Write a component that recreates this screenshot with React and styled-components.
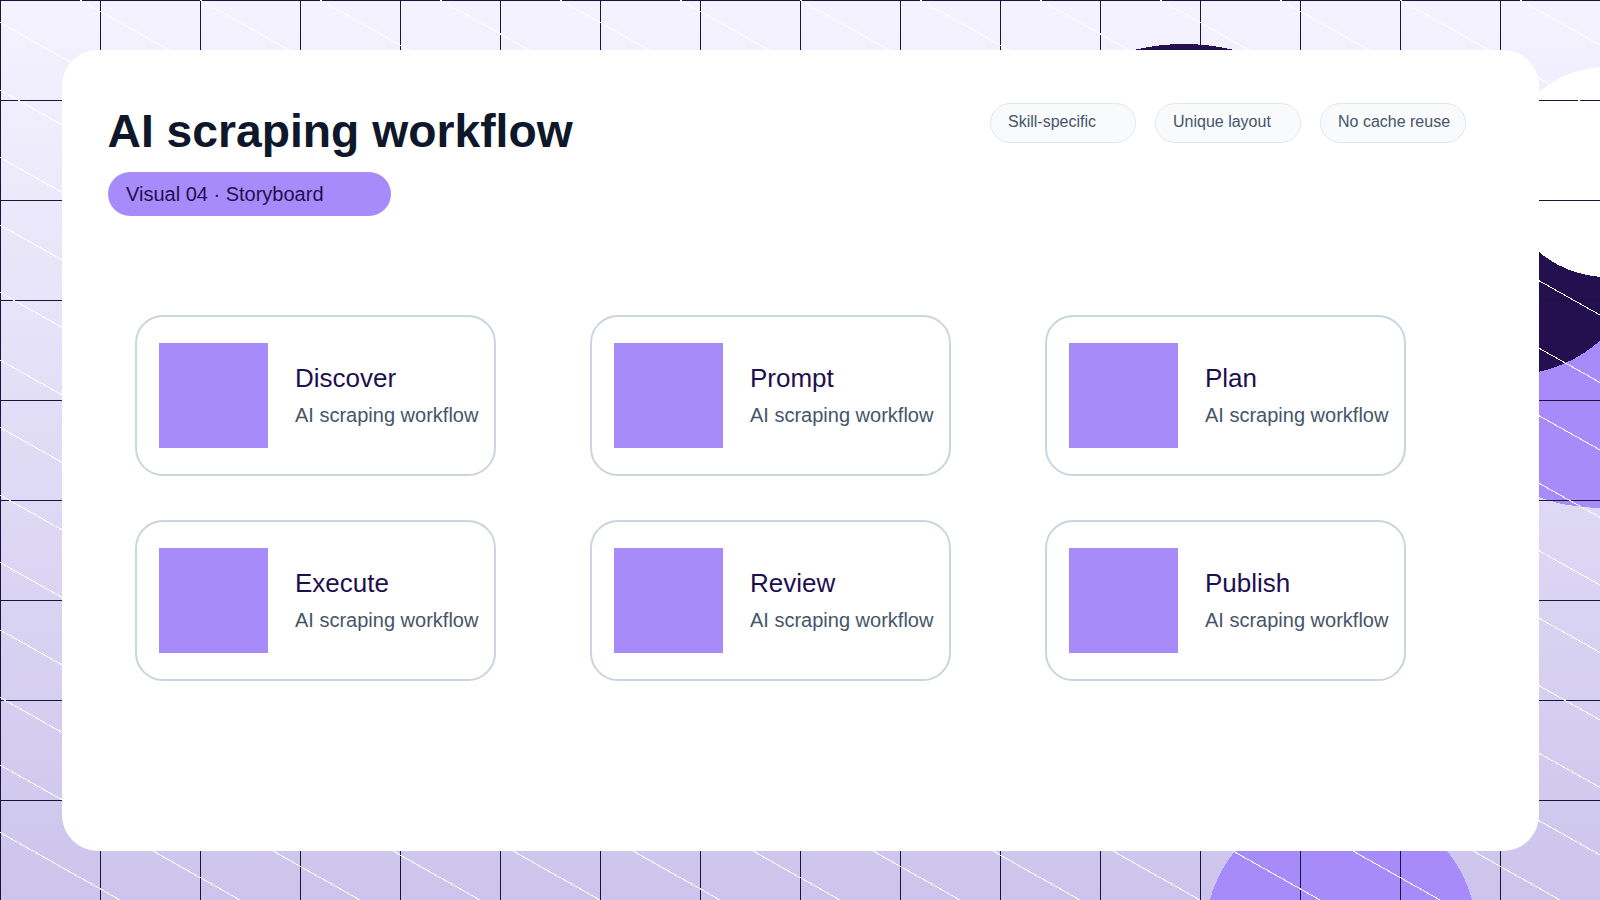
import React from "react";
import styled, { createGlobalStyle } from "styled-components";

const Global = createGlobalStyle`
  html, body { margin: 0; padding: 0; }
  body { font-family: "Liberation Sans", Arial, sans-serif; background: #fff; }
`;

const Stage = styled.div`
  position: relative;
  width: 1600px;
  height: 900px;
  overflow: hidden;
  background: linear-gradient(180deg, #f5f3ff 0%, #ccc4ec 100%);
  padding: 50px 61px 49px 62px;
  box-sizing: border-box;
  display: flex;
`;

const Backdrop = styled.svg`
  position: absolute;
  inset: 0;
  shape-rendering: crispEdges;
`;

const Panel = styled.main`
  position: relative;
  flex: 1;
  background: #fff;
  border-radius: 36px;
  padding: 54px 73px 0 46px;
  display: flex;
  flex-direction: column;
`;

const Header = styled.header`
  display: flex;
  justify-content: space-between;
  align-items: flex-start;
  margin-top: -1px;
`;

const TitleBlock = styled.div`
  display: flex;
  flex-direction: column;
  align-items: flex-start;
`;

const Title = styled.h1`
  margin: 1px 0 0 -0.5px;
  font-size: 46.25px;
  line-height: 55px;
  font-weight: 700;
  color: #0f172a;
`;

const Pill = styled.div`
  margin-top: 13px;
  width: 283px;
  height: 44px;
  box-sizing: border-box;
  padding: 0 18px;
  border-radius: 22px;
  background: #a78bfa;
  color: #1e1050;
  font-size: 20px;
  line-height: 44px;
  white-space: pre;
`;

const Chips = styled.div`
  display: flex;
  gap: 19px;
`;

const Chip = styled.span`
  width: 146px;
  height: 40px;
  box-sizing: border-box;
  padding: 0 17px;
  border: 1px solid #e2e8f0;
  border-radius: 20px;
  background: #f8fafc;
  color: #475569;
  font-size: 16px;
  line-height: 35px;
  white-space: nowrap;
`;

const Cards = styled.section`
  margin: 99px 0 0 27px;
  display: grid;
  grid-template-columns: repeat(3, 361px);
  grid-auto-rows: 161px;
  column-gap: 94px;
  row-gap: 44px;
`;

const Card = styled.article`
  box-sizing: border-box;
  border: 2px solid #cbd5e1;
  border-radius: 28px;
  background: #fff;
  padding: 26px 0 0 22px;
  display: flex;
  align-items: flex-start;
  gap: 27px;
`;

const Thumb = styled.div`
  width: 109px;
  height: 105px;
  flex: none;
  background: #a78bfa;
`;

const CardText = styled.div`
  display: flex;
  flex-direction: column;
  padding-top: 19px;
`;

const CardTitle = styled.h2`
  margin: 0;
  font-size: 26px;
  line-height: 32px;
  font-weight: 400;
  color: #1e1050;
`;

const CardSub = styled.p`
  margin: 9px 0 0;
  font-size: 20px;
  line-height: 24px;
  color: #475569;
  white-space: nowrap;
`;

const steps = ["Discover", "Prompt", "Plan", "Execute", "Review", "Publish"];
const gridX = Array.from({ length: 17 }, (_, i) => i * 100);
const gridY = Array.from({ length: 10 }, (_, i) => i * 100);
const slashes = Array.from({ length: 30 }, (_, i) => -1720 + i * 120);

export default function App() {
  return (
    <>
      <Global />
      <Stage>
        <Backdrop width="1600" height="900" viewBox="0 0 1600 900">
          <circle cx="1184" cy="254" r="210" fill="#24104f" />
          <circle cx="1341" cy="936" r="136" fill="#a78bfa" />
          <circle cx="1600" cy="330" r="178" fill="#a78bfa" />
          <circle cx="1510" cy="240" r="135" fill="#24104f" />
          <circle cx="1607" cy="172" r="105" fill="#fff" />
          {gridX.map((x) => (
            <line key={x} x1={x + 0.5} y1="0" x2={x + 0.5} y2="900" stroke="#181440" strokeWidth="1" />
          ))}
          {gridY.map((y) => (
            <line key={y} x1="0" y1={y + 0.5} x2="1600" y2={y + 0.5} stroke="#181440" strokeWidth="1" />
          ))}
          {slashes.map((x) => (
            <line key={x} x1={x} y1="0" x2={x + 1600} y2="900" stroke="#fff" strokeWidth="1" />
          ))}
        </Backdrop>
        <Panel>
          <Header>
            <TitleBlock>
              <Title>AI scraping workflow</Title>
              <Pill>Visual 04 · Storyboard</Pill>
            </TitleBlock>
            <Chips>
              <Chip>Skill-specific</Chip>
              <Chip>Unique layout</Chip>
              <Chip>No cache reuse</Chip>
            </Chips>
          </Header>
          <Cards>
            {steps.map((s) => (
              <Card key={s}>
                <Thumb />
                <CardText>
                  <CardTitle>{s}</CardTitle>
                  <CardSub>AI scraping workflow</CardSub>
                </CardText>
              </Card>
            ))}
          </Cards>
        </Panel>
      </Stage>
    </>
  );
}
